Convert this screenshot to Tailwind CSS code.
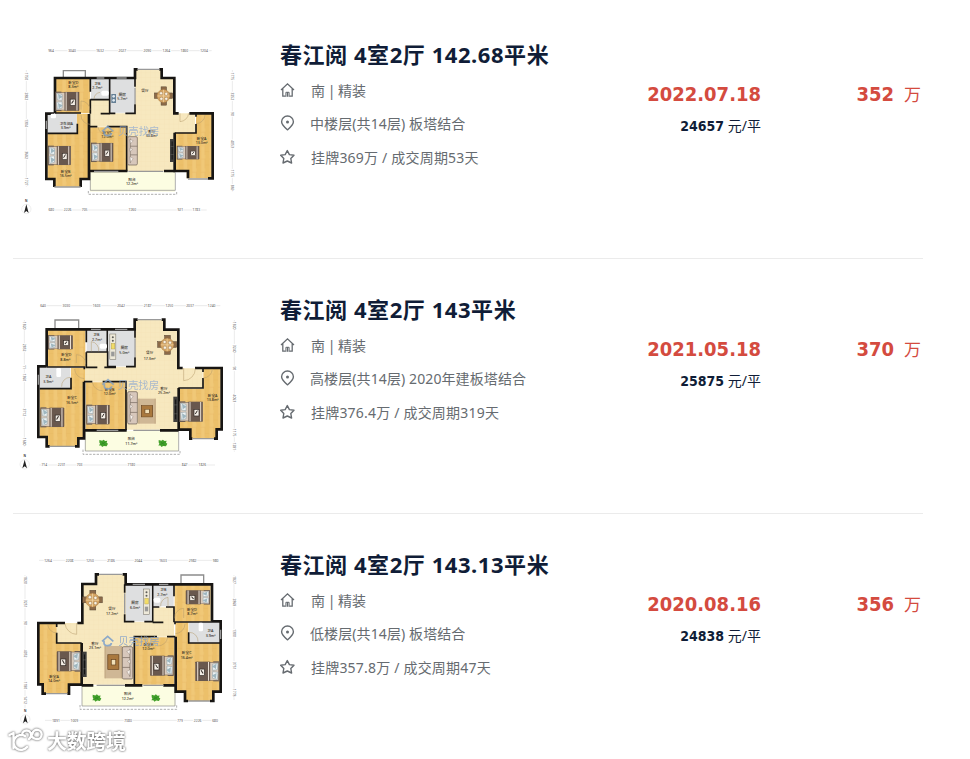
<!DOCTYPE html>
<html lang="zh-CN">
<head>
    <meta charset="UTF-8">
    <meta name="viewport" content="width=device-width, initial-scale=1.0">
    <title>春江阅 成交记录</title>
    <script src="https://cdn.jsdelivr.net/npm/@tailwindcss/browser@4"></script>
</head>
<body class="bg-white overflow-hidden font-['Noto_Sans','Noto_Sans_CJK_SC',sans-serif]">

    <!-- 公用图形 -->
    <svg class="absolute w-0 h-0" aria-hidden="true">
        <defs>
            <pattern id="wood" width="26" height="40" patternUnits="userSpaceOnUse">
                <rect width="26" height="40" fill="#ecc06a"/>
                <rect width="13" height="40" fill="#f0c877"/>
                <path d="M0 0V40M13 10V40M0 12H13M13 30H26" stroke="#e4b560" stroke-width="1"/>
            </pattern>
            <pattern id="tile" width="14" height="14" patternUnits="userSpaceOnUse">
                <rect width="14" height="14" fill="#f7e8bf"/>
                <path d="M0 0H14M0 0V14" stroke="#f0ddad" stroke-width="1"/>
            </pattern>
            <symbol id="bed" viewBox="0 0 72 66" preserveAspectRatio="none" overflow="visible">
                <rect x="0" y="2" width="18" height="62" fill="#6f6258"/>
                <rect x="2" y="5" width="68" height="56" fill="#d9cbbd" stroke="#5f4d42" stroke-width="1.5"/>
                <path d="M4 8L20 11V30L6 28ZM4 36L20 34V54L6 58Z" fill="#eef3f4" stroke="#8296a0" stroke-width="1.5"/>
                <path d="M8 9L22 18L10 26Z M8 38L22 46L10 56Z" fill="#9eb6bf"/>
                <rect x="27" y="3" width="43" height="60" fill="#69584e"/>
                <path d="M32 4V62M64 4V62" stroke="#eadfd3" stroke-width="3"/>
                <rect x="44" y="26" width="15" height="20" fill="#f4eee6" stroke="#302925" stroke-width="2"/>
                <path d="M48 40L54 30" stroke="#302925" stroke-width="3"/>
            </symbol>
            <symbol id="dining" viewBox="0 0 60 60" overflow="visible">
                <g fill="#8c6a48" stroke="#51402f" stroke-width="1.5">
                    <rect x="22" y="0" width="18" height="13"/><rect x="22" y="47" width="18" height="13"/>
                    <rect x="0" y="20" width="13" height="18"/><rect x="47" y="20" width="13" height="18"/>
                </g>
                <circle cx="30" cy="30" r="21" fill="#d8a764" stroke="#a87a43" stroke-width="1.5"/>
                <path d="M30 10V50M10 30H50" stroke="#f3dbb0" stroke-width="2"/>
                <g fill="#faf1df" stroke="#765a3b"><circle cx="22" cy="21" r="5"/><circle cx="39" cy="23" r="5"/><circle cx="23" cy="39" r="5"/><circle cx="39" cy="39" r="5"/></g>
            </symbol>
            <symbol id="sofa" viewBox="0 0 32 94" preserveAspectRatio="none" overflow="visible">
                <rect x="1" y="1" width="30" height="92" rx="4" fill="#d7c7bb" stroke="#65584e" stroke-width="2"/>
                <path d="M9 7V87M9 32H31M9 60H31" stroke="#75675c" stroke-width="2"/>
                <path d="M8 10L18 14L10 24ZM8 66L18 72L10 84ZM8 38L16 42L9 50Z" fill="#f7f1ec" stroke="#776b62"/>
            </symbol>
            <symbol id="coffee" viewBox="0 0 52 104" preserveAspectRatio="none" overflow="visible">
                <rect width="52" height="104" fill="#cfb795"/>
                <path d="M3 0V104M49 0V104" stroke="#c0a67f" stroke-width="2"/>
                <rect x="10" y="28" width="32" height="48" fill="#a9783e" stroke="#65431f" stroke-width="2"/>
                <rect x="20" y="44" width="13" height="17" fill="#f1e0b8" stroke="#65431f" stroke-width="2"/>
            </symbol>
            <symbol id="tv" viewBox="0 0 14 74" preserveAspectRatio="none" overflow="visible">
                <rect width="14" height="74" fill="#3f3e3c"/><path d="M7 8V66" stroke="#111" stroke-width="3"/>
                <path d="M2 24H12M2 50H12" stroke="#8c8c86"/>
            </symbol>
            <symbol id="plant" viewBox="0 0 26 22" overflow="visible">
                <path d="M1 2L9 4L13 1L18 5L24 4L22 10L26 13L22 20L14 19L9 22L6 18L0 18L3 13L1 9Z" fill="#43a12b"/>
                <path d="M6 15L18 8M8 8L18 16" stroke="#2c8420" stroke-width="2"/>
            </symbol>
            <symbol id="kitchen" viewBox="0 0 18 76" overflow="visible">
                <rect width="18" height="76" fill="#eee9d9" stroke="#706b60" stroke-width="1.5"/>
                <rect x="4" y="28" width="11" height="17" fill="#f2dc67" stroke="#9d8e42"/>
                <circle cx="9" cy="10" r="3" fill="#5c5c58"/><circle cx="9" cy="20" r="3" fill="#5c5c58"/><rect x="4" y="53" width="10" height="14" fill="#999"/>
            </symbol>
            <symbol id="north" viewBox="0 0 30 44" overflow="visible">
                <text x="15" y="7" text-anchor="middle" font-size="9" font-weight="700" fill="#333">N</text>
                <circle cx="15" cy="28" r="14" fill="#fff" stroke="#ddd" stroke-width="1.5"/>
                <path d="M15 14L22 40L15 34L8 40Z" fill="#222"/>
            </symbol>
            <symbol id="logo" viewBox="0 0 42 36" overflow="visible">
                <path d="M4 19L21 4L38 19M10 17V24Q10 32 21 32Q32 32 32 24" fill="none" stroke="#7b9fcb" stroke-width="5"/>
            </symbol>
            <symbol id="i-home" viewBox="0 0 16 16">
                <path d="M1 8L7.5 1.8L14 8M2.8 6.7V14.2H5.6M12.2 6.7V14.2H9.4M7.5 14.8V10" fill="none" stroke="#666b70" stroke-width="1.3"/>
                <path d="M5.9 14.8V10.3H9.1V14.8" fill="none" stroke="#666b70" stroke-width="1"/>
            </symbol>
            <symbol id="i-pin" viewBox="0 0 16 16">
                <path d="M7.5 14.8C5 12.6 1.6 9.8 1.6 6.7A5.9 5.7 0 0 1 13.4 6.7C13.4 9.8 10 12.6 7.5 14.8Z" fill="none" stroke="#666b70" stroke-width="1.4"/>
                <circle cx="7.5" cy="6.9" r="1.5" fill="#666b70"/>
            </symbol>
            <symbol id="i-star" viewBox="0 0 16 16">
                <path d="M7.3 1.5L9.4 5.6L14 6.2L10.8 9.5L11.6 14L7.3 12L3 14L3.8 9.5L.7 6.2L5.2 5.6Z" fill="none" stroke="#666b70" stroke-width="1.4" stroke-linejoin="round"/>
            </symbol>
        </defs>
    </svg>

    <main class="relative w-[923px] h-[759px] pl-[13px] pt-1">

        <!-- 房源 1 -->
        <section class="flex h-[255px] border-b border-[#ebebeb]">
            <svg class="w-[240px] h-[190px] mt-[31px] -ml-[3px] shrink-0" viewBox="0 0 720 570">
                <path d="M375 103H455V127H493V235H555V293H493V408H350V275H240V195H298V235H375Z" fill="url(#tile)"/>
                <g fill="url(#wood)">
                    <path d="M135 130H240V235H135Z"/>
                    <path d="M200 237H240V430H210V455H133V430H112V297H200Z"/>
                    <path d="M240 277H350V408H240Z"/>
                    <path d="M495 293H558V237H607V430H530V408H495Z"/>
                </g>
                <path d="M243 130H298V193H243ZM112 237H200V293H112ZM302 130H373V233H302Z" fill="#dedfe0"/>
                <path d="M240 410H495V470H240Z" fill="#fcfde2"/>
                <path d="M235 468V478H500V468" fill="none" stroke="#888" stroke-width="2" stroke-dasharray="7 4"/>
                <path d="M241 412V466H496V412" fill="none" stroke="#888" stroke-width="2"/>
                <path d="M160 128V107H226V128" fill="#fff" stroke="#8c8c8c" stroke-width="4"/>
                <g fill="none" stroke="#171513" stroke-width="8">
                    <path d="M135 235V129H375V103H383M448 103H455V129H493V235H506M538 235H608V430H594M534 430V408H494V293"/>
                    <path d="M132 236H109V432H133V456M212 456V432H237V237"/>
                    <path d="M237 408H352M462 408H495"/>
                </g>
                <g fill="none" stroke="#171513" stroke-width="5">
                    <path d="M241 130V170M241 193V236M241 194H299V130M299 194V235H316M346 235H375V208M375 130V155M134 234H213M112 295H202V266M272 236H300M237 275H262M292 275H350V410M494 294H558V267M558 235V245"/>
                </g>
                <g fill="none" stroke="#999" stroke-width="4">
                    <path d="M383 103H448M260 129H283M320 129H350M133 456H212M534 432H594M109 257V282M252 409H325M355 409H460M375 158V207"/>
                </g>
                <g fill="none" stroke="#b49a6b" stroke-width="1.5">
                    <path d="M213 224V198A27 27 0 0 1 240 225M240 268A27 27 0 0 1 213 240M510 235V260A28 28 0 0 0 536 235M558 266A27 27 0 0 0 585 240M264 276A28 28 0 0 0 292 300M252 192A22 22 0 0 1 270 172"/>
                </g>
                <use href="#bed" x="136" y="168" width="73" height="62"/>
                <use href="#bed" x="114" y="330" width="70" height="63"/>
                <use href="#bed" x="243" y="321" width="68" height="62"/>
                <use href="#bed" x="500" y="331" width="69" height="44"/>
                <use href="#dining" x="433" y="154" width="55" height="58"/>
                <use href="#sofa" x="352" y="304" width="31" height="87"/>
                <use href="#tv" x="480" y="312" width="13" height="69"/>
                <rect x="274" y="167" width="22" height="15" rx="5" fill="#fff"/><rect x="122" y="236" width="16" height="14" rx="4" fill="#fff"/>
                <rect x="304" y="177" width="14" height="27" fill="#657f95"/><circle cx="311" cy="184" r="4" fill="#dfe8ef"/><circle cx="311" cy="196" r="4" fill="#dfe8ef"/>
                <g font-size="11" font-weight="500" fill="#302a22" text-anchor="middle">
                    <text x="190" y="148">卧室D</text><text x="190" y="160">8.3m²</text>
                    <text x="262" y="150">卫B</text><text x="262" y="163">2.7m²</text>
                    <text x="337" y="182">厨房</text><text x="337" y="194">5.7m²</text>
                    <text x="405" y="170">餐厅</text>
                    <text x="169" y="270">卫生间A</text><text x="167" y="281">3.9m²</text>
                    <text x="292" y="297">卧室C</text><text x="292" y="309">12.0m²</text>
                    <text x="425" y="293">客厅</text><text x="425" y="305">30.8m²</text>
                    <text x="575" y="314">卧室A</text><text x="575" y="327">13.0m²</text>
                    <text x="167" y="415">卧室B</text><text x="167" y="427">16.5m²</text>
                    <text x="366" y="438">阳台</text><text x="366" y="450">12.2m²</text>
                </g>
                <g opacity=".75"><use href="#logo" x="272" y="269" width="42" height="38"/><text x="324" y="300" font-size="31" fill="#90abd2">贝壳找房</text></g>
                <g stroke="#d5d5d5" stroke-width="1.5"><path d="M115 47H605M115 525H590M49 105V455M667 105V470"/></g>
                <g font-size="10" fill="#555" stroke="#fff" stroke-width="6" paint-order="stroke" text-anchor="middle">
                    <text x="123" y="51">964</text><text x="186" y="51">3040</text><text x="270" y="51">1632</text><text x="337" y="51">2027</text><text x="412" y="51">2090</text><text x="469" y="51">1264</text><text x="523" y="51">1860</text><text x="582" y="51">1204</text>
                    <text x="124" y="529">680</text><text x="173" y="529">2226</text><text x="224" y="529">705</text><text x="367" y="529">7260</text><text x="511" y="529">921</text><text x="559" y="529">1783</text>
                    <g transform="rotate(90)"><text x="124" y="-46">1750</text><text x="184" y="-46">2882</text><text x="264" y="-46">1304</text><text x="360" y="-46">3682</text><text x="440" y="-46">1727</text><text x="124" y="-664">1775</text><text x="184" y="-664">3252</text><text x="237" y="-664">90</text><text x="327" y="-664">4053</text><text x="415" y="-664">1175</text><text x="458" y="-664">869</text></g>
                </g>
                <use href="#north" x="34" y="494" width="30" height="44"/>
            </svg>
            <div class="ml-[30px] mt-[34px] w-[331px] shrink-0 text-sm text-[#666b70]">
                <h2 class="h-[32px] leading-[32px] text-[22px] font-bold tracking-[0.56px] text-[#101d37] whitespace-nowrap">春江阅 4室2厅 142.68平米</h2>
                <p class="mt-[11px] h-5 flex items-center [word-spacing:-1px]"><svg class="size-4 mr-[15px] mb-[2px]"><use href="#i-home"/></svg>南 | 精装</p>
                <p class="mt-[13px] h-5 flex items-center tracking-[0.1px]"><svg class="size-4 mr-[14px] mb-[3px]"><use href="#i-pin"/></svg>中楼层(共14层) 板塔结合</p>
                <p class="mt-[14px] h-5 flex items-center tracking-[0.2px]"><svg class="size-4 mr-[15px] mb-[2px]"><use href="#i-star"/></svg>挂牌369万 / 成交周期53天</p>
            </div>
            <div class="mt-[76px] w-[150px] shrink-0 text-right">
                <p class="h-7 leading-7 text-xl font-bold text-[#d44b3f] font-['DejaVu_Sans_Condensed','DejaVu_Sans',sans-serif] [font-stretch:condensed]">2022.07.18</p>
                <p class="mt-2 h-5 leading-5 text-sm text-[#101d37]"><b class="font-['DejaVu_Sans_Condensed','DejaVu_Sans',sans-serif] [font-stretch:condensed]">24657</b> 元/平</p>
            </div>
            <div class="mt-[76px] ml-auto pr-[2px] h-7 flex items-center gap-[10px] text-[#d44b3f]">
                <b class="text-xl font-['DejaVu_Sans_Condensed','DejaVu_Sans',sans-serif] [font-stretch:condensed]">352</b><span class="text-[17px] pt-px">万</span>
            </div>
        </section>

        <!-- 房源 2 -->
        <section class="flex h-[255px] border-b border-[#ebebeb]">
            <svg class="w-[240px] h-[190px] mt-[31px] -ml-[3px] shrink-0" viewBox="0 0 720 570">
                <path d="M375 89H463V118H505V235H578V294H505V419H348V275H225V187H292V230H375Z" fill="url(#tile)"/>
                <g fill="url(#wood)">
                    <path d="M112 120H226V230H112Z"/>
                    <path d="M183 234H225V443H205V468H110V440H89V297H183Z"/>
                    <path d="M227 277H348V419H227Z"/>
                    <path d="M507 296H580V236H632V418H620V446H540V419H507Z"/>
                </g>
                <path d="M230 120H291V184H230ZM89 234H181V294H89ZM297 120H373V229H297Z" fill="#dedfe0"/>
                <path d="M225 423H505V483H225Z" fill="#fcfde2"/>
                <path d="M219 479V493H510V479" fill="none" stroke="#888" stroke-width="2" stroke-dasharray="7 4"/>
                <path d="M226 425V483H506V425" fill="none" stroke="#888" stroke-width="2"/>
                <path d="M135 117V90H206V117" fill="#fff" stroke="#8c8c8c" stroke-width="4"/>
                <g fill="none" stroke="#171513" stroke-width="8">
                    <path d="M110 230V118H374V89H383M455 89H463V119H505V234H518M555 234H635V418H620V446H612M547 446H541V419H506V294"/>
                    <path d="M110 229H85V441H110V469H119M195 469H205V445H222V275"/>
                    <path d="M222 421H350M450 421H506"/>
                </g>
                <g fill="none" stroke="#171513" stroke-width="5">
                    <path d="M229 120V157M229 187V232H262M229 186H292V120M293 184V230H318M348 230H375V202M375 118V143M110 231H223V238M89 296H183V263M283 232H318M222 275H247M278 275H348V421M505 294H579V264M579 235V246"/>
                </g>
                <g fill="none" stroke="#999" stroke-width="4">
                    <path d="M383 89H455M243 118H272M315 118H352M119 469H195M547 446H612M85 254V284M260 421H325M370 421H450M375 145V202"/>
                </g>
                <g fill="none" stroke="#b49a6b" stroke-width="1.5">
                    <path d="M199 219V194A27 27 0 0 1 227 222M223 266A30 30 0 0 1 194 237M521 234V272A36 36 0 0 0 556 236M580 264A28 28 0 0 0 607 238M247 277A30 30 0 0 0 278 302M155 290A26 26 0 0 1 181 262M244 184V155A25 25 0 0 1 266 184"/>
                </g>
                <use href="#bed" x="114" y="134" width="76" height="46"/>
                <use href="#bed" x="91" y="350" width="73" height="64"/>
                <use href="#bed" x="229" y="342" width="71" height="64"/>
                <use href="#bed" x="508" y="332" width="72" height="66"/>
                <use href="#dining" x="443" y="134" width="57" height="61"/>
                <use href="#coffee" x="384" y="326" width="54" height="75"/>
                <use href="#sofa" x="352" y="304" width="31" height="99"/>
                <use href="#tv" x="490" y="320" width="14" height="76"/>
                <use href="#kitchen" x="299" y="132" width="19" height="76"/>
                <rect x="269" y="161" width="22" height="15" rx="5" fill="#fff"/><rect x="139" y="234" width="14" height="27" rx="4" fill="#fff"/>
                <use href="#plant" x="267" y="448" width="27" height="23"/><use href="#plant" x="445" y="448" width="27" height="23"/>
                <g font-size="11" font-weight="500" fill="#302a22" text-anchor="middle">
                    <text x="169" y="198">卧室D</text><text x="166" y="213">8.8m²</text>
                    <text x="259" y="138">卫B</text><text x="261" y="153">2.7m²</text>
                    <text x="343" y="177">厨房</text><text x="343" y="192">5.0m²</text>
                    <text x="419" y="193">餐厅</text><text x="419" y="209">17.3m²</text>
                    <text x="115" y="265">卫A</text><text x="115" y="279">3.9m²</text>
                    <text x="186" y="328">卧室C</text><text x="186" y="342">16.5m²</text>
                    <text x="299" y="302">卧室B</text><text x="299" y="316">12.0m²</text>
                    <text x="462" y="299">客厅</text><text x="462" y="313">25.2m²</text>
                    <text x="608" y="320">卧室A</text><text x="608" y="333">13.8m²</text>
                    <text x="364" y="451">阳台</text><text x="364" y="465">11.7m²</text>
                </g>
                <g opacity=".75"><use href="#logo" x="273" y="264" width="42" height="38"/><text x="323" y="297" font-size="31" fill="#90abd2">贝壳找房</text></g>
                <g stroke="#d5d5d5" stroke-width="1.5"><path d="M92 47H631M88 525H615M43 90V470M673 90V485"/></g>
                <g font-size="10" fill="#555" stroke="#fff" stroke-width="6" paint-order="stroke" text-anchor="middle">
                    <text x="99" y="51">640</text><text x="169" y="51">3030</text><text x="260" y="51">1603</text><text x="333" y="51">2042</text><text x="413" y="51">2187</text><text x="478" y="51">1250</text><text x="540" y="51">2037</text><text x="605" y="51">1240</text>
                    <text x="103" y="529">714</text><text x="155" y="529">2231</text><text x="209" y="529">703</text><text x="364" y="529">7180</text><text x="524" y="529">847</text><text x="577" y="529">1826</text>
                    <g transform="rotate(90)"><text x="107" y="-40">1820</text><text x="173" y="-40">2852</text><text x="231" y="-40">11</text><text x="262" y="-40">1360</text><text x="367" y="-40">3712</text><text x="455" y="-40">1680</text><text x="107" y="-669">1820</text><text x="176" y="-669">3240</text><text x="235" y="-669">90</text><text x="325" y="-669">4063</text><text x="428" y="-669">1175</text><text x="469" y="-669">1281</text></g>
                </g>
                <use href="#north" x="29" y="495" width="30" height="44"/>
            </svg>
            <div class="ml-[30px] mt-[34px] w-[331px] shrink-0 text-sm text-[#666b70]">
                <h2 class="h-[32px] leading-[32px] text-[22px] font-bold tracking-[0.56px] text-[#101d37] whitespace-nowrap">春江阅 4室2厅 143平米</h2>
                <p class="mt-[11px] h-5 flex items-center [word-spacing:-1px]"><svg class="size-4 mr-[15px] mb-[2px]"><use href="#i-home"/></svg>南 | 精装</p>
                <p class="mt-[13px] h-5 flex items-center tracking-[0.1px]"><svg class="size-4 mr-[14px] mb-[3px]"><use href="#i-pin"/></svg>高楼层(共14层) 2020年建板塔结合</p>
                <p class="mt-[14px] h-5 flex items-center tracking-[0.2px]"><svg class="size-4 mr-[15px] mb-[2px]"><use href="#i-star"/></svg>挂牌376.4万 / 成交周期319天</p>
            </div>
            <div class="mt-[76px] w-[150px] shrink-0 text-right">
                <p class="h-7 leading-7 text-xl font-bold text-[#d44b3f] font-['DejaVu_Sans_Condensed','DejaVu_Sans',sans-serif] [font-stretch:condensed]">2021.05.18</p>
                <p class="mt-2 h-5 leading-5 text-sm text-[#101d37]"><b class="font-['DejaVu_Sans_Condensed','DejaVu_Sans',sans-serif] [font-stretch:condensed]">25875</b> 元/平</p>
            </div>
            <div class="mt-[76px] ml-auto pr-[2px] h-7 flex items-center gap-[10px] text-[#d44b3f]">
                <b class="text-xl font-['DejaVu_Sans_Condensed','DejaVu_Sans',sans-serif] [font-stretch:condensed]">370</b><span class="text-[17px] pt-px">万</span>
            </div>
        </section>

        <!-- 房源 3 -->
        <section class="flex h-[245px]">
            <svg class="w-[240px] h-[190px] mt-[31px] -ml-[3px] shrink-0" viewBox="30 0 720 570">
                <path d="M288 88H378V230H458V187H522V275H403V419H246V294H170V234H247V117H288Z" fill="url(#tile)"/>
                <g fill="url(#wood)">
                    <path d="M524 120H632V230H524Z"/>
                    <path d="M526 232H565V294H659V440H637V468H555V440H526Z"/>
                    <path d="M403 277H523V419H403Z"/>
                    <path d="M117 236H170V294H244V419H206V446H127V418H117Z"/>
                </g>
                <path d="M377 120H453V229H377ZM460 120H521V184H460ZM567 234H659V293H567Z" fill="#dedfe0"/>
                <path d="M246 423H526V483H246Z" fill="#fcfde2"/>
                <path d="M240 480V493H530V480" fill="none" stroke="#888" stroke-width="2" stroke-dasharray="7 4"/>
                <path d="M246 425V483H525V425" fill="none" stroke="#888" stroke-width="2"/>
                <path d="M543 117V90H611V117" fill="#fff" stroke="#8c8c8c" stroke-width="4"/>
                <g fill="none" stroke="#171513" stroke-width="8">
                    <path d="M636 230V118H377V88H368M297 88H288V117H247V234H232M195 234H115V418H128V446H138M202 446H207V419H245V294"/>
                    <path d="M636 229H662V440H640V468H630M564 468H555V440H527V275"/>
                    <path d="M245 421H280M375 421H427M490 421H527"/>
                </g>
                <g fill="none" stroke="#171513" stroke-width="5">
                    <path d="M522 120V154M522 184V232M458 120V186H478M498 186H522M458 186V230H433M403 230H374V208M374 118V143M636 231H525V238M660 294H566V262M490 232H458M526 275H501M471 275H403V421M245 294H170V263M170 235V246"/>
                </g>
                <g fill="none" stroke="#999" stroke-width="4">
                    <path d="M297 88H368M398 118H435M477 118H505M564 468H630M138 446H202M662 254V282M290 421H375M430 421H490M374 145V206"/>
                </g>
                <g fill="none" stroke="#b49a6b" stroke-width="1.5">
                    <path d="M551 219V190A28 28 0 0 0 524 220M526 266A30 30 0 0 0 555 237M230 234V268A36 36 0 0 1 195 236M170 264A28 28 0 0 1 143 238M503 277A30 30 0 0 1 472 303M594 290A26 26 0 0 0 568 262M504 184V157A25 25 0 0 0 482 184"/>
                </g>
                <use href="#bed" transform="translate(630 134) scale(-1 1)" width="74" height="46"/>
                <use href="#bed" transform="translate(658 347) scale(-1 1)" width="73" height="64"/>
                <use href="#bed" transform="translate(521 329) scale(-1 1)" width="72" height="66"/>
                <use href="#bed" transform="translate(242 316) scale(-1 1)" width="73" height="66"/>
                <use href="#dining" x="248" y="135" width="59" height="61"/>
                <use href="#coffee" x="313" y="303" width="54" height="97"/>
                <use href="#sofa" transform="translate(399 304) scale(-1 1)" width="33" height="99"/>
                <use href="#tv" x="247" y="320" width="13" height="76"/>
                <use href="#kitchen" x="430" y="132" width="19" height="76"/>
                <rect x="461" y="158" width="20" height="15" rx="5" fill="#fff"/><rect x="596" y="233" width="13" height="26" rx="4" fill="#fff"/>
                <use href="#plant" x="277" y="447" width="27" height="23"/><use href="#plant" x="454" y="447" width="27" height="23"/>
                <g font-size="11" font-weight="500" fill="#302a22" text-anchor="middle">
                    <text x="576" y="197">卧室D</text><text x="577" y="211">8.7m²</text>
                    <text x="490" y="138">卫B</text><text x="487" y="153">2.7m²</text>
                    <text x="405" y="177">厨房</text><text x="405" y="191">6.0m²</text>
                    <text x="336" y="196">餐厅</text><text x="336" y="210">17.2m²</text>
                    <text x="631" y="262">卫A</text><text x="632" y="277">3.9m²</text>
                    <text x="560" y="328">卧室C</text><text x="560" y="342">16.4m²</text>
                    <text x="445" y="302">卧室B</text><text x="445" y="316">12.0m²</text>
                    <text x="285" y="299">客厅</text><text x="285" y="313">23.1m²</text>
                    <text x="162" y="398">卧室A</text><text x="162" y="412">14.0m²</text>
                    <text x="383" y="450">阳台</text><text x="383" y="465">12.2m²</text>
                </g>
                <g opacity=".85"><use href="#logo" x="302" y="269" width="42" height="38"/><text x="355" y="300" font-size="31" fill="#86a3cb">贝壳找房</text></g>
                <g stroke="#d5d5d5" stroke-width="1.5"><path d="M117 46H656M135 526H657M75 90V490M702 90V465"/></g>
                <g font-size="10" fill="#555" stroke="#fff" stroke-width="6" paint-order="stroke" text-anchor="middle">
                    <text x="144" y="50">1264</text><text x="209" y="50">2208</text><text x="270" y="50">1250</text><text x="333" y="50">2186</text><text x="415" y="50">2044</text><text x="489" y="50">1603</text><text x="578" y="50">2982</text><text x="647" y="50">980</text>
                    <text x="168" y="530">1891</text><text x="223" y="530">1009</text><text x="384" y="530">7380</text><text x="540" y="530">779</text><text x="593" y="530">2226</text><text x="645" y="530">680</text>
                    <g transform="rotate(90)"><text x="105" y="-72">1820</text><text x="176" y="-72">3251</text><text x="234" y="-72">90</text><text x="326" y="-72">4052</text><text x="421" y="-72">1180</text><text x="465" y="-72">1412</text><text x="105" y="-698">1827</text><text x="172" y="-698">2868</text><text x="264" y="-698">1300</text><text x="362" y="-698">3751</text><text x="443" y="-698">1778</text></g>
                </g>
                <use href="#north" x="61" y="495" width="30" height="44"/>
            </svg>
            <div class="ml-[30px] mt-[34px] w-[331px] shrink-0 text-sm text-[#666b70]">
                <h2 class="h-[32px] leading-[32px] text-[22px] font-bold tracking-[0.56px] text-[#101d37] whitespace-nowrap">春江阅 4室2厅 143.13平米</h2>
                <p class="mt-[11px] h-5 flex items-center [word-spacing:-1px]"><svg class="size-4 mr-[15px] mb-[2px]"><use href="#i-home"/></svg>南 | 精装</p>
                <p class="mt-[13px] h-5 flex items-center tracking-[0.1px]"><svg class="size-4 mr-[14px] mb-[3px]"><use href="#i-pin"/></svg>低楼层(共14层) 板塔结合</p>
                <p class="mt-[14px] h-5 flex items-center tracking-[0.2px]"><svg class="size-4 mr-[15px] mb-[2px]"><use href="#i-star"/></svg>挂牌357.8万 / 成交周期47天</p>
            </div>
            <div class="mt-[76px] w-[150px] shrink-0 text-right">
                <p class="h-7 leading-7 text-xl font-bold text-[#d44b3f] font-['DejaVu_Sans_Condensed','DejaVu_Sans',sans-serif] [font-stretch:condensed]">2020.08.16</p>
                <p class="mt-2 h-5 leading-5 text-sm text-[#101d37]"><b class="font-['DejaVu_Sans_Condensed','DejaVu_Sans',sans-serif] [font-stretch:condensed]">24838</b> 元/平</p>
            </div>
            <div class="mt-[76px] ml-auto pr-[2px] h-7 flex items-center gap-[10px] text-[#d44b3f]">
                <b class="text-xl font-['DejaVu_Sans_Condensed','DejaVu_Sans',sans-serif] [font-stretch:condensed]">356</b><span class="text-[17px] pt-px">万</span>
            </div>
        </section>

        <!-- 水印 -->
        <svg class="absolute left-0 top-[724px] w-[135px] h-[35px] drop-shadow-[0_0_1px_rgba(0,0,0,0.75)]" viewBox="0 0 135 35">
            <path d="M9.5 11L13.5 9V24M25 12A7.5 7.5 0 1 0 27 23M22 11A4.6 4.6 0 1 1 29 15Q31 13 32.5 9.5A4.6 4.6 0 1 1 37 15Q33 15 31 11" fill="none" stroke="#fff" stroke-width="2.4" stroke-linecap="round" stroke-linejoin="round"/>
            <text x="47" y="25" font-size="20" font-weight="700" fill="#fff" textLength="79">大数跨境</text>
        </svg>
    </main>
</body>
</html>
